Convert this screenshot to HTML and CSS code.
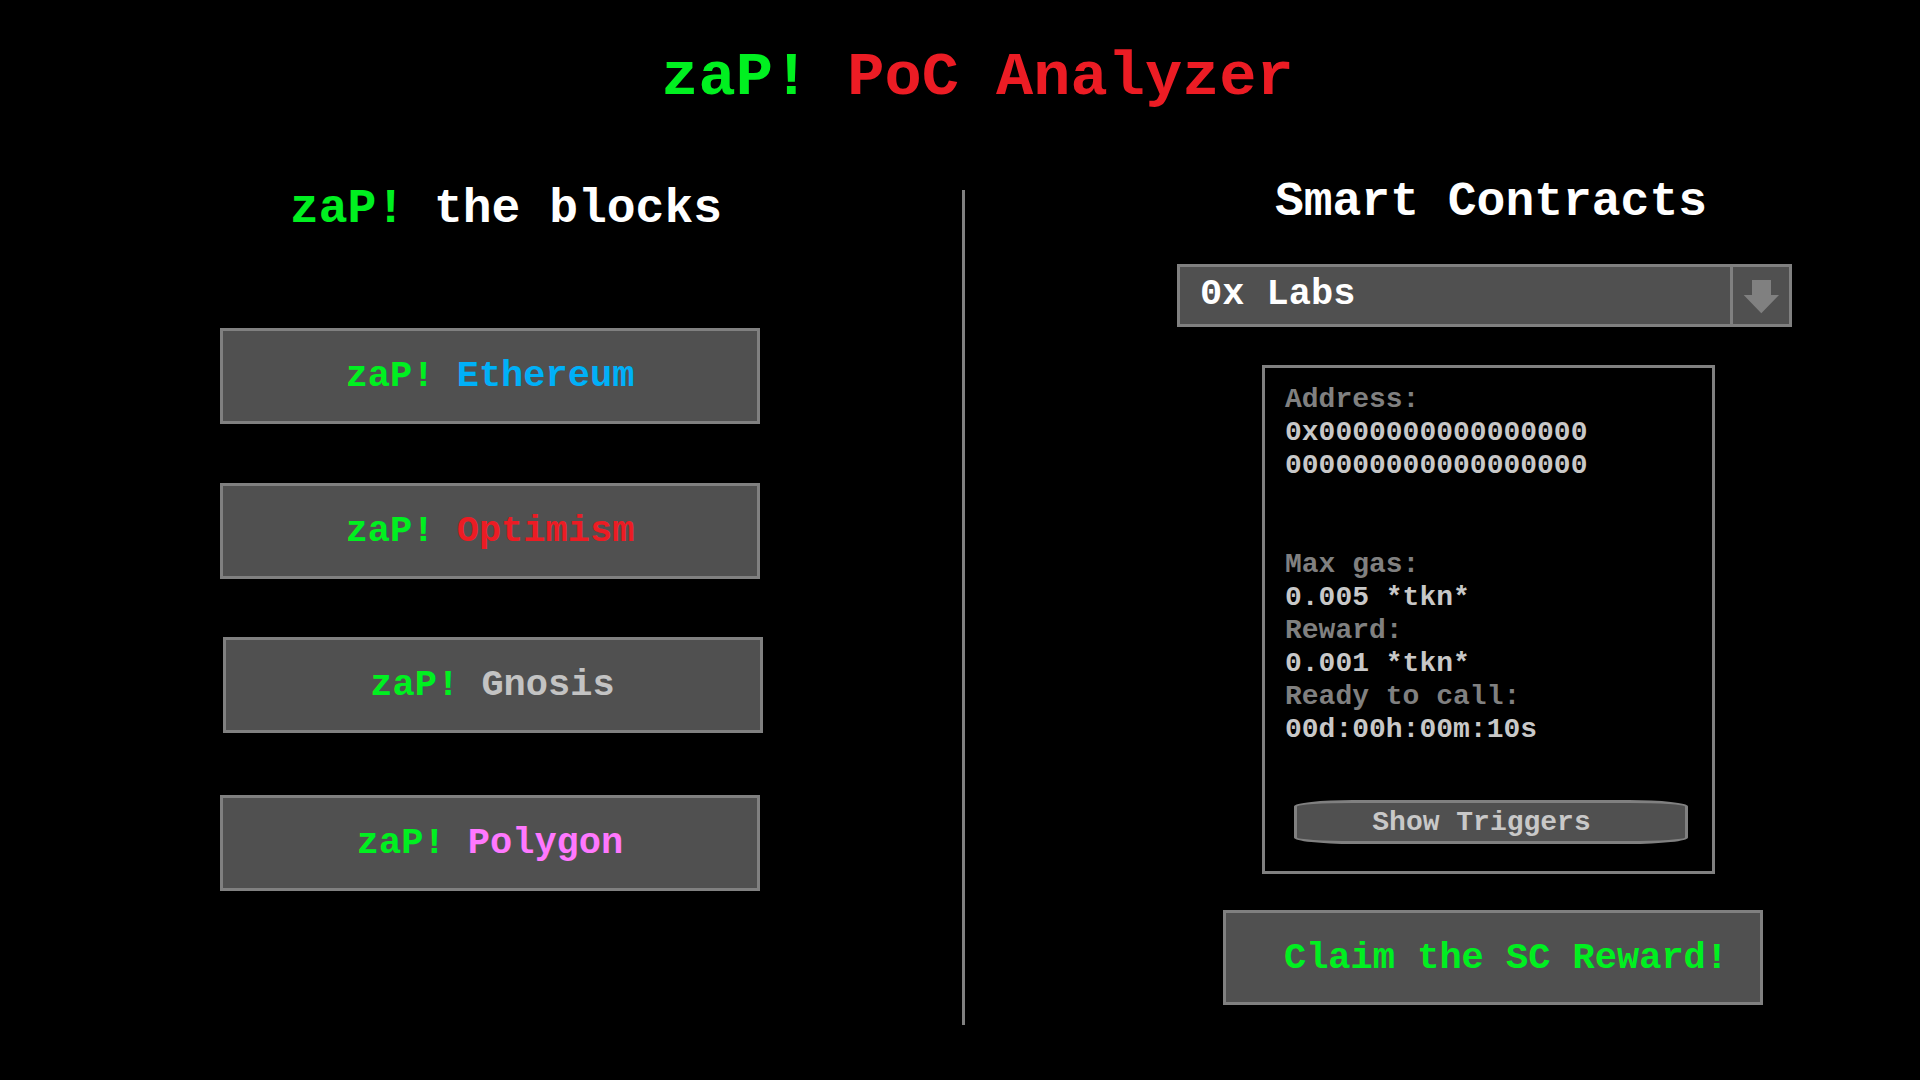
FILE: index.html
```html
<!DOCTYPE html>
<html lang="en">
<head>
<meta charset="utf-8">
<title>zaP! PoC Analyzer</title>
<link rel="stylesheet" href="styles.css">
</head>
<body>
<header class="title"><span class="zap">zaP!</span> <span class="red">PoC Analyzer</span></header>
<main class="panels">
  <section class="col col-left">
    <h2 class="heading heading-left"><span class="zap">zaP!</span> the blocks</h2>
    <button class="chain chain-first"><span class="btn-text"><span class="zap">zaP!</span> <span class="eth">Ethereum</span></span></button>
    <button class="chain chain-second"><span class="btn-text"><span class="zap">zaP!</span> <span class="red">Optimism</span></span></button>
    <button class="chain chain-third"><span class="btn-text"><span class="zap">zaP!</span> <span class="gno">Gnosis</span></span></button>
    <button class="chain chain-fourth"><span class="btn-text"><span class="zap">zaP!</span> <span class="poly">Polygon</span></span></button>
  </section>
  <div class="divider"></div>
  <section class="col col-right">
    <h2 class="heading heading-right">Smart Contracts</h2>
    <div class="select">
      <div class="select-value">0x Labs</div>
      <div class="select-arrow">
        <svg width="56" height="57" viewBox="0 0 56 57"><polygon points="19,13 38,13 38,28 46,28 28.3,46.3 10.7,28 19,28" fill="#808080"/></svg>
      </div>
    </div>
    <div class="info">
      <div class="info-lines">
        <div class="label">Address:</div>
        <div class="value">0x0000000000000000</div>
        <div class="value">000000000000000000</div>
      </div>
      <div class="info-lines info-stats">
        <div class="label">Max gas:</div>
        <div class="value">0.005 *tkn*</div>
        <div class="label">Reward:</div>
        <div class="value">0.001 *tkn*</div>
        <div class="label">Ready to call:</div>
        <div class="value">00d:00h:00m:10s</div>
      </div>
      <button class="triggers">Show Triggers</button>
    </div>
    <button class="claim"><span class="btn-text">Claim the SC Reward!</span></button>
  </section>
</main>
</body>
</html>
```
FILE: styles.css
```css
html, body {
  margin: 0;
  padding: 0;
  background: #000;
}
body {
  width: 1920px;
  height: 1080px;
  overflow: hidden;
  font-family: "Liberation Mono", "Courier New", monospace;
  font-weight: bold;
  color: #fff;
}
.zap { color: #00f020; }
.red { color: #ec1c24; }
.eth { color: #00b0f8; }
.gno { color: #c3c3c3; }
.poly { color: #ff78ff; }

.title {
  font-size: 62px;
  line-height: 72px;
  padding-top: 42px;
  padding-left: 35px;
  text-align: center;
  white-space: pre;
}

.panels {
  display: flex;
  align-items: flex-start;
}
.col {
  display: flex;
  flex-direction: column;
  align-items: center;
  box-sizing: border-box;
}
.col-left {
  width: 962px;
  padding-left: 18px;
}
.divider {
  width: 3px;
  height: 835px;
  margin-top: 76px;
  background: #808080;
  flex: none;
}
.col-right {
  flex: 1;
  padding-left: 95px;
}

.heading {
  margin: 0;
  font-size: 48px;
  line-height: 56px;
  font-weight: bold;
  color: #fff;
  white-space: pre;
}
.heading-left {
  margin-top: 67px;
  margin-left: 32px;
}
.heading-right {
  margin-top: 60px;
  margin-left: 2px;
}

.chain, .claim {
  box-sizing: border-box;
  width: 540px;
  height: 96px;
  background: #505050;
  border: 3px solid #808080;
  border-radius: 0;
  padding: 0;
  font-family: inherit;
  font-weight: bold;
  font-size: 37px;
  color: #fff;
  display: flex;
  align-items: center;
  justify-content: center;
}
.btn-text { white-space: pre; }
.chain-first { margin-top: 91px; }
.chain-second { margin-top: 59px; }
.chain-third { margin-top: 58px; margin-left: 5px; }
.chain-fourth { margin-top: 62px; }

.select {
  box-sizing: border-box;
  width: 615px;
  height: 63px;
  margin-top: 34px;
  margin-left: -11px;
  background: #505050;
  border: 3px solid #808080;
  display: flex;
}
.select-value {
  flex: 1;
  padding-left: 20px;
  padding-bottom: 4px;
  display: flex;
  align-items: center;
  font-size: 37px;
  color: #fff;
}
.select-arrow {
  width: 56px;
  border-left: 3px solid #808080;
  display: flex;
}

.info {
  box-sizing: border-box;
  width: 453px;
  margin-top: 38px;
  margin-left: -3px;
  border: 3px solid #808080;
  padding: 15px 19px 27px 20px;
  display: flex;
  flex-direction: column;
  font-size: 28px;
  line-height: 33px;
}
.info-stats { margin-top: 66px; }
.label { color: #808080; }
.value { color: #c8c8c8; }

.triggers {
  box-sizing: border-box;
  align-self: center;
  width: 394px;
  height: 44px;
  margin-top: 54px;
  margin-left: 3px;
  padding: 0 18px 0 0;
  background: #505050;
  border: 3px solid #808080;
  border-radius: 15%;
  font-family: inherit;
  font-weight: bold;
  font-size: 28px;
  color: #c8c8c8;
}

.claim {
  margin-top: 36px;
  margin-left: 6px;
  height: 95px;
  padding-left: 26px;
  color: #00f020;
}
```
